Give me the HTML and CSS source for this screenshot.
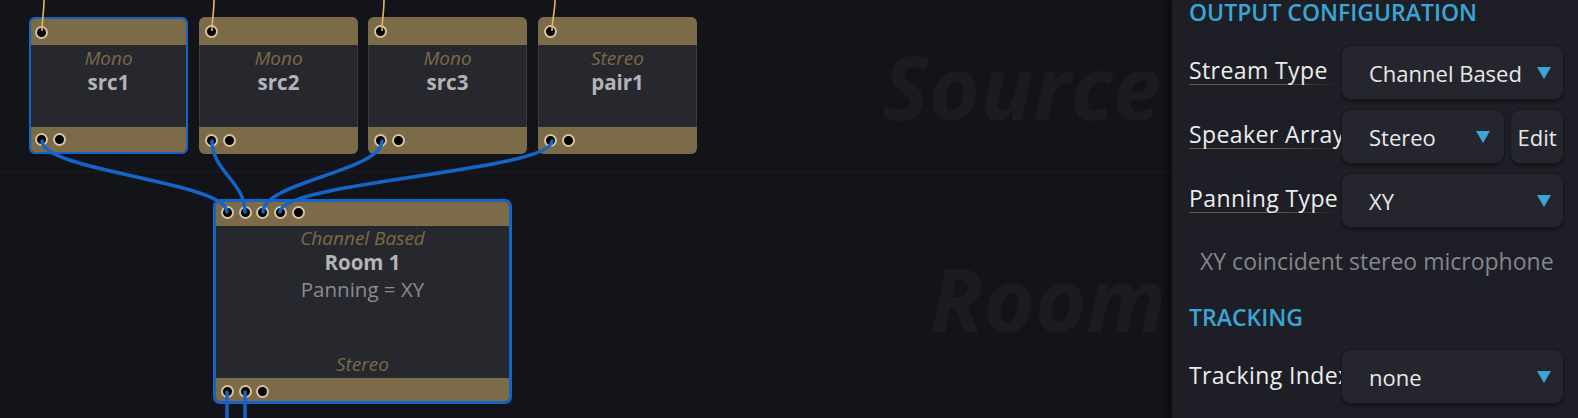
FILE: index.html
```html
<!DOCTYPE html>
<html>
<head>
<meta charset="utf-8">
<link rel="stylesheet" href="styles.css">
</head>
<body>
<div class="app">
  <div class="canvas">
    <section class="lane lane-source"><span class="lane-label">Source</span></section>
    <section class="lane lane-room"><span class="lane-label">Room</span></section>

    <div class="node node-src selected at-src1">
      <div class="bar bar-top"><i class="port"></i></div>
      <div class="node-body"><div class="node-type">Mono</div><div class="node-name">src1</div></div>
      <div class="bar bar-bottom"><i class="port"></i><i class="port"></i></div>
    </div>
    <div class="node node-src at-src2">
      <div class="bar bar-top"><i class="port"></i></div>
      <div class="node-body"><div class="node-type">Mono</div><div class="node-name">src2</div></div>
      <div class="bar bar-bottom"><i class="port"></i><i class="port"></i></div>
    </div>
    <div class="node node-src at-src3">
      <div class="bar bar-top"><i class="port"></i></div>
      <div class="node-body"><div class="node-type">Mono</div><div class="node-name">src3</div></div>
      <div class="bar bar-bottom"><i class="port"></i><i class="port"></i></div>
    </div>
    <div class="node node-src at-pair1">
      <div class="bar bar-top"><i class="port"></i></div>
      <div class="node-body"><div class="node-type">Stereo</div><div class="node-name">pair1</div></div>
      <div class="bar bar-bottom"><i class="port"></i><i class="port"></i></div>
    </div>

    <div class="node node-room at-room1">
      <div class="bar bar-top"><i class="port"></i><i class="port"></i><i class="port"></i><i class="port"></i><i class="port"></i></div>
      <div class="node-body">
        <div class="node-type">Channel Based</div>
        <div class="node-name">Room 1</div>
        <div class="node-info">Panning = XY</div>
        <div class="node-type node-out">Stereo</div>
      </div>
      <div class="bar bar-bottom"><i class="port"></i><i class="port"></i><i class="port"></i></div>
    </div>

    <svg class="wires" width="1172" height="418" viewBox="0 0 1172 418">
      <g class="wire-in" fill="none">
        <path d="M44 0 C44 12 42 20 42 31"/>
        <path d="M214 0 C214 12 212 20 212 31"/>
        <path d="M384 0 C384 12 382 20 382 31"/>
        <path d="M555 0 C555 12 552 20 552 31"/>
      </g>
      <g class="wire" fill="none">
        <path d="M42 141 C42 171 227 182 227 212"/>
        <path d="M212 141 C212 171 245 182 245 212"/>
        <path d="M382 141 C382 171 263 182 263 212"/>
        <path d="M552 141 C552 171 280 182 280 212"/>
        <path d="M227 392 L227 420"/>
        <path d="M245 392 L245 420"/>
      </g>
    </svg>
  </div>

  <aside class="panel">
    <h2 class="section-title first">OUTPUT CONFIGURATION</h2>
    <div class="row">
      <span class="label hint">Stream Type</span>
      <div class="controls">
        <div class="select"><span>Channel Based</span><i class="caret"></i></div>
      </div>
    </div>
    <div class="row">
      <span class="label hint">Speaker Array</span>
      <div class="controls">
        <div class="select select-narrow"><span>Stereo</span><i class="caret"></i></div>
        <div class="button">Edit</div>
      </div>
    </div>
    <div class="row">
      <span class="label hint">Panning Type</span>
      <div class="controls">
        <div class="select"><span>XY</span><i class="caret"></i></div>
      </div>
    </div>
    <p class="description">XY coincident stereo microphone</p>
    <h2 class="section-title">TRACKING</h2>
    <div class="row row-tracking">
      <span class="label">Tracking Index</span>
      <div class="controls">
        <div class="select"><span>none</span><i class="caret"></i></div>
      </div>
    </div>
  </aside>
</div>
</body>
</html>
```

FILE: styles.css
```css
html, body {
  margin: 0;
  padding: 0;
  background: #131419;
}

body {
  width: 1578px;
  height: 418px;
  overflow: hidden;
  font-family: "Open Sans", "Noto Sans", sans-serif;
}

.app {
  display: flex;
  width: 1578px;
  height: 418px;
}

/* ---------- canvas ---------- */
.canvas {
  position: relative;
  width: 1172px;
  flex: 0 0 1172px;
  height: 418px;
  background: #131419;
  overflow: hidden;
  display: flex;
  flex-direction: column;
}

.lane {
  display: flex;
  justify-content: flex-end;
  align-items: center;
  padding-right: 10px;
  box-sizing: border-box;
}

.lane-source {
  height: 172px;
  border-bottom: 1px solid #1b1d22;
  padding-top: 0;
}

.lane-room {
  flex: 1;
  padding-top: 6px;
  padding-right: 6px;
}

.lane-label {
  font-size: 88px;
  font-weight: 700;
  font-style: italic;
  color: #1a1c21;
  line-height: 1;
}

/* ---------- nodes ---------- */
.node {
  position: absolute;
  box-sizing: border-box;
  display: flex;
  flex-direction: column;
  border-radius: 6px;
  overflow: hidden;
  background: #27282d;
  z-index: 1;
}

.node-src {
  width: 159px;
  height: 137px;
}

.at-src1 { left: 29px; top: 17px; }
.at-src2 { left: 199px; top: 17px; }
.at-src3 { left: 368px; top: 17px; }
.at-pair1 { left: 538px; top: 17px; }

.bar {
  background: #7c6b48;
  display: flex;
  align-items: center;
  gap: 5px;
  padding-left: 6px;
  box-sizing: border-box;
}

.node-src .bar-top { height: 28px; }
.node-src .bar-bottom { height: 27px; }

.node-src.selected {
  border: 2px solid #1665c6;
}
.node-src.selected .bar { padding-left: 4px; }
.node-src.selected .bar-top { height: 26px; }
.node-src.selected .bar-bottom { height: 25px; }

.node-src:not(.selected) .node-body {
  box-shadow: inset 1px 0 0 #3a3b41, inset -1px 0 0 #3a3b41;
}

.port {
  display: block;
  width: 13px;
  height: 13px;
  box-sizing: border-box;
  border-radius: 50%;
  background: #000;
  border: 2px solid #d4c4a2;
  flex: 0 0 auto;
}

.node-body {
  flex: 1;
  display: flex;
  flex-direction: column;
  align-items: center;
  padding-top: 2px;
}

.node-type {
  font-style: italic;
  font-size: 19px;
  line-height: 22px;
  color: #7a6a49;
}

.node-name {
  font-weight: 700;
  font-size: 20.5px;
  line-height: 26px;
  color: #b3b3b8;
}

.node-info {
  font-size: 20.5px;
  line-height: 28px;
  color: #8b8b90;
}

/* room node */
.node-room {
  width: 299px;
  height: 205px;
  border: 3px solid #1665c6;
  border-radius: 7px;
}

.at-room1 { left: 213px; top: 199px; }

.node-room .bar {
  gap: 4.7px;
  padding-left: 5px;
  align-items: flex-start;
}

.node-room .bar-top {
  height: 24px;
  padding-top: 4px;
}

.node-room .bar-bottom {
  height: 23px;
  padding-top: 7px;
}

.node-room .node-body {
  padding-top: 1px;
  padding-bottom: 2px;
}

.node-out {
  margin-top: auto;
  line-height: 24px;
}

/* wires */
.wires {
  position: absolute;
  left: 0;
  top: 0;
  z-index: 2;
  pointer-events: none;
}

.wire path {
  stroke: #1565c8;
  stroke-width: 3.5;
  stroke-linecap: round;
}

.wire-in path {
  stroke: #e2b760;
  stroke-width: 1.6;
}

/* ---------- panel ---------- */
.panel {
  flex: 1;
  height: 418px;
  background: #1e1f26;
  box-shadow: -5px 0 6px rgba(0, 0, 0, 0.45);
  padding: 0 14px 0 17px;
  box-sizing: border-box;
  position: relative;
  z-index: 3;
  color: #ececec;
  font-size: 22px;
  overflow: hidden;
}

.section-title {
  margin: 0;
  font-size: 23px;
  font-weight: 600;
  line-height: 24px;
  color: #3aa5d6;
  letter-spacing: 0;
}

.section-title.first {
  height: 24px;
  margin-bottom: 21px;
}

.row {
  display: flex;
  align-items: center;
  height: 55px;
  margin-bottom: 9px;
}

.label {
  flex: 0 0 152px;
  width: 152px;
  white-space: nowrap;
  overflow: hidden;
  font-size: 23px;
  letter-spacing: 0.4px;
  line-height: 30px;
  margin-top: -6px;
  color: #ececec;
}

.label.hint {
  background: linear-gradient(90deg, #6e5e3e 0%, #6e5e3e 55%, rgba(110, 94, 62, 0) 100%) no-repeat left bottom / 100% 1px;
}

.controls {
  flex: 1;
  display: flex;
  gap: 5px;
  height: 100%;
}

.select, .button {
  height: 100%;
  box-sizing: border-box;
  background: #25262d;
  border: 1px solid #18191d;
  border-radius: 10px;
  box-shadow: 0 2px 2px rgba(0, 0, 0, 0.35);
  display: flex;
  align-items: center;
  color: #e8e8e8;
}

.select {
  flex: 1;
  padding: 0 12px 0 27px;
  justify-content: space-between;
}

.select-narrow {
  padding-right: 14px;
}

.button {
  flex: 0 0 54px;
  justify-content: center;
}

.caret {
  display: block;
  width: 0;
  height: 0;
  border-left: 7px solid transparent;
  border-right: 7px solid transparent;
  border-top: 12px solid #3aa5d6;
}

.description {
  margin: 18px 0 0 11px;
  font-size: 23px;
  line-height: 30px;
  color: #85868c;
  white-space: nowrap;
}

.section-title:not(.first) {
  margin-top: 29px;
  margin-bottom: 20px;
}

.row-tracking .label {
  margin-top: -4px;
}
```
